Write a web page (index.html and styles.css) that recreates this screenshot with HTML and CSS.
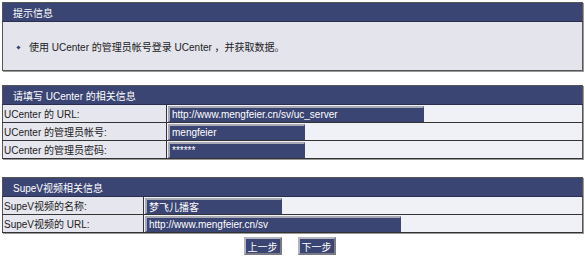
FILE: index.html
```html
<!DOCTYPE html>
<html lang="zh-CN">

<head>
    <meta charset="UTF-8">
    <title>UCenter 安装 - 第二步</title>
    <link rel="stylesheet" href="styles.css">
</head>

<body>

<table class="panel notice">
    <tr><th>提示信息</th></tr>
    <tr>
        <td class="notice-body"><span class="dot"></span>使用 UCenter 的管理员帐号登录 UCenter ，并获取数据。</td>
    </tr>
</table>

<table class="panel form ucenter">
    <tr><th colspan="3">请填写 UCenter 的相关信息</th></tr>
    <tr>
        <td class="label">UCenter 的 URL:</td>
        <td class="field"><input type="text" class="input wide" value="http://www.mengfeier.cn/sv/uc_server"></td>
        <td class="rest"></td>
    </tr>
    <tr>
        <td class="label">UCenter 的管理员帐号:</td>
        <td class="field"><input type="text" class="input" value="mengfeier"></td>
        <td class="rest"></td>
    </tr>
    <tr>
        <td class="label">UCenter 的管理员密码:</td>
        <td class="field"><input type="text" class="input" value="******"></td>
        <td class="rest"></td>
    </tr>
</table>

<table class="panel form supev">
    <tr><th colspan="3">SupeV视频相关信息</th></tr>
    <tr>
        <td class="label">SupeV视频的名称:</td>
        <td class="field"><input type="text" class="input" value="梦飞儿播客"></td>
        <td class="rest"></td>
    </tr>
    <tr>
        <td class="label">SupeV视频的 URL:</td>
        <td class="field"><input type="text" class="input wide" value="http://www.mengfeier.cn/sv"></td>
        <td class="rest"></td>
    </tr>
</table>

<div class="actions">
    <button class="btn">上一步</button>
    <button class="btn">下一步</button>
</div>

</body>
</html>
```

FILE: styles.css
```css
body {
    font-family: "Liberation Sans", "Noto Sans CJK SC", sans-serif;
    font-size: 10px;
    color: #222;
    margin: 0;
    padding: 2px 2px 0 2px;
    background: #fff;
}

.panel {
    width: 581px;
    border-collapse: collapse;
    border: 1px solid #555;
    box-shadow: 1px 1px 0 #999;
}

.panel th {
    background-color: #3b4573;
    color: #fff;
    font-weight: normal;
    text-align: left;
    height: 18px;
    padding: 0 0 0 10px;
    border-bottom: 1px solid #2a2f50;
}

.notice-body {
    background-color: #e4e4ed;
    height: 48px;
    padding: 0 0 0 14px;
}

.dot {
    display: inline-block;
    width: 3px;
    height: 3px;
    background-color: #3b4573;
    transform: rotate(45deg);
    margin: 0 9px 2px 0;
}

.ucenter {
    margin-top: 14px;
}

.supev {
    margin-top: 18px;
}

.form td {
    height: 17px;
    padding: 0;
    border-top: 1px solid #bbb;
    border-bottom: 1px solid #333;
}

.form .label {
    background-color: #e6e6ee;
    padding-left: 1px;
    border-right: 1px solid #333;
}

.form .field,
.form .rest {
    background-color: #f0f0f7;
}

.form .field {
    border-left: 1px solid #bbb;
    padding-left: 1px;
}

.ucenter .label {
    width: 162px;
}

.supev .label {
    width: 139px;
}

.form .field {
    width: 257px;
}

.input {
    display: block;
    box-sizing: border-box;
    width: 137px;
    height: 16px;
    margin: 0;
    padding: 0 0 0 2px;
    font-family: inherit;
    font-size: 10px;
    color: #fff;
    background-color: #3b4573;
    border: 1px solid #3b4573;
    border-top: 2px solid #a9a9b3;
    border-left: 2px solid #a9a9b3;
    outline: none;
}

.input.wide {
    width: 256px;
}

.actions {
    display: flex;
    justify-content: center;
    gap: 16px;
    margin-top: 4px;
    padding-right: 6px;
}

.btn {
    box-sizing: border-box;
    height: 18px;
    width: 38px;
    padding: 0;
    font-family: inherit;
    font-size: 10px;
    color: #fff;
    background-color: #3b4573;
    border: 2px solid;
    border-color: #b5b5bd #7a7a84 #7a7a84 #b5b5bd;
    cursor: pointer;
}
```
